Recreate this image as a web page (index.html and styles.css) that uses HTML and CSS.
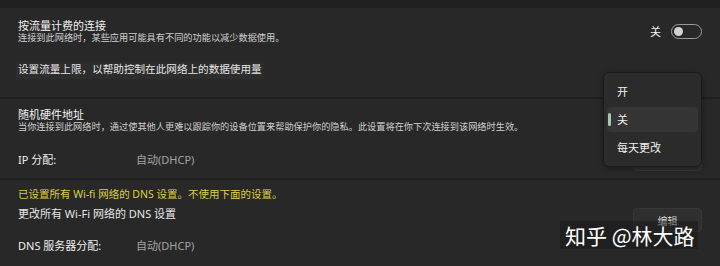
FILE: index.html
```html
<!DOCTYPE html>
<html lang="zh-CN">
<head>
<meta charset="utf-8">
<link rel="stylesheet" href="styles.css">
</head>
<body>
<div class="page">
  <section class="card card-metered">
    <div class="head-row">
      <div class="text">
        <div class="title">按流量计费的连接</div>
        <div class="desc">连接到此网络时，某些应用可能具有不同的功能以减少数据使用。</div>
      </div>
      <div class="toggle-wrap">
        <span class="toggle-label">关</span>
        <span class="toggle"><span class="knob"></span></span>
      </div>
    </div>
    <div class="link hl">设置流量上限，以帮助控制在此网络上的数据使用量</div>
  </section>

  <section class="card card-mac">
    <div class="title">随机硬件地址</div>
    <div class="desc">当你连接到此网络时，通过使其他人更难以跟踪你的设备位置来帮助保护你的隐私。此设置将在你下次连接到该网络时生效。</div>
    <div class="kv-row ip-row">
      <span class="key">IP 分配:</span>
      <span class="val">自动(DHCP)</span>
      <button class="btn">编辑</button>
    </div>
  </section>

  <section class="card card-dns">
    <div class="warn">已设置所有 Wi-fi 网络的 DNS 设置。不使用下面的设置。</div>
    <div class="link-row">
      <span class="link">更改所有 Wi-Fi 网络的 DNS 设置</span>
      <button class="btn btn-dns">编辑</button>
    </div>
    <div class="kv-row dns-row">
      <span class="key">DNS 服务器分配:</span>
      <span class="val">自动(DHCP)</span>
    </div>
  </section>

  <div class="menu">
    <div class="menu-item">开</div>
    <div class="menu-item selected"><span class="accent"></span>关</div>
    <div class="menu-item">每天更改</div>
  </div>

  <div class="watermark">知乎 @林大路</div>
</div>
</body>
</html>
```

FILE: styles.css
```css
html, body {
  margin: 0;
  padding: 0;
  background: #1f1f1f;
}

body {
  width: 720px;
  height: 266px;
  overflow: hidden;
  font-family: "Noto Sans", "Noto Sans CJK SC", sans-serif;
  color: #f0f0f0;
}

.page {
  position: relative;
  display: flex;
  flex-direction: column;
  gap: 2px;
  padding-top: 8px;
  height: 258px;
}

.card {
  background: #282828;
  padding: 0 18px;
  box-sizing: border-box;
  overflow: hidden;
}

.card-metered {
  height: 89px;
  padding-top: 11px;
}

.card-mac {
  height: 79px;
  padding-top: 9px;
}

.card-dns {
  flex: 1;
  padding-top: 8px;
}

.title {
  font-size: 11px;
  line-height: 13px;
  color: #f2f2f2;
}

.desc {
  font-size: 9.2px;
  line-height: 12px;
  color: #cfcfcf;
  white-space: nowrap;
}

.head-row {
  display: flex;
  align-items: center;
}

.text {
  flex: 1;
}

.toggle-wrap {
  display: flex;
  align-items: center;
  gap: 10px;
}

.toggle-label {
  font-size: 11px;
  line-height: 13px;
  color: #f0f0f0;
}

.toggle {
  display: flex;
  align-items: center;
  box-sizing: border-box;
  width: 31px;
  height: 15px;
  border: 1px solid #9a9a9a;
  border-radius: 8px;
  padding-left: 2px;
}

.knob {
  width: 9px;
  height: 9px;
  border-radius: 50%;
  background: #d2d2d2;
}

.link {
  font-size: 11px;
  line-height: 13px;
  color: #e6e6e6;
}

.hl {
  display: inline-block;
  margin-top: 18px;
  margin-left: -2px;
  padding: 1px 2px 3px;
  background: #2d2d2d;
  font-size: 10.6px;
}

.kv-row {
  display: flex;
  align-items: center;
  font-size: 11px;
  line-height: 13px;
}

.key {
  width: 118px;
  color: #eeeeee;
}

.val {
  color: #a3a3a3;
}

.ip-row {
  margin-top: 14px;
  height: 24px;
}

.btn {
  margin-left: auto;
  width: 69px;
  height: 24px;
  box-sizing: border-box;
  background: #2f2f2f;
  border: 1px solid #373737;
  border-radius: 4px;
  color: #dcdcdc;
  font-family: "Noto Sans CJK SC", sans-serif;
  font-size: 10px;
  padding: 0;
}

.warn {
  font-size: 10.5px;
  line-height: 13px;
  color: #ddcd45;
  white-space: nowrap;
}

.link-row {
  display: flex;
  align-items: flex-start;
  margin-top: 6px;
  height: 25px;
}

.btn-dns {
  margin-top: 1px;
}

.dns-row {
  margin-top: 7px;
}

.menu {
  position: absolute;
  left: 603px;
  top: 72px;
  width: 99px;
  height: 95px;
  box-sizing: border-box;
  padding: 6px 3px;
  background: #2b2b2b;
  border: 1px solid #1b1b1b;
  border-radius: 6px;
  box-shadow: 0 2px 6px rgba(0, 0, 0, 0.35);
  display: flex;
  flex-direction: column;
  gap: 3px;
}

.menu-item {
  position: relative;
  height: 25px;
  line-height: 25px;
  padding-left: 10px;
  border-radius: 4px;
  font-size: 11px;
  color: #f0f0f0;
}

.menu-item.selected {
  background: #353535;
}

.accent {
  position: absolute;
  left: 1px;
  top: 6px;
  width: 3px;
  height: 13px;
  border-radius: 2px;
  background: #a9c8b8;
}

.watermark {
  position: absolute;
  left: 560px;
  top: 221px;
  padding: 0 3px 0 5px;
  font-family: "Noto Sans CJK SC", sans-serif;
  font-size: 21px;
  line-height: 28px;
  color: #ffffff;
  background: rgba(20, 20, 20, 0.45);
  white-space: nowrap;
}
```
